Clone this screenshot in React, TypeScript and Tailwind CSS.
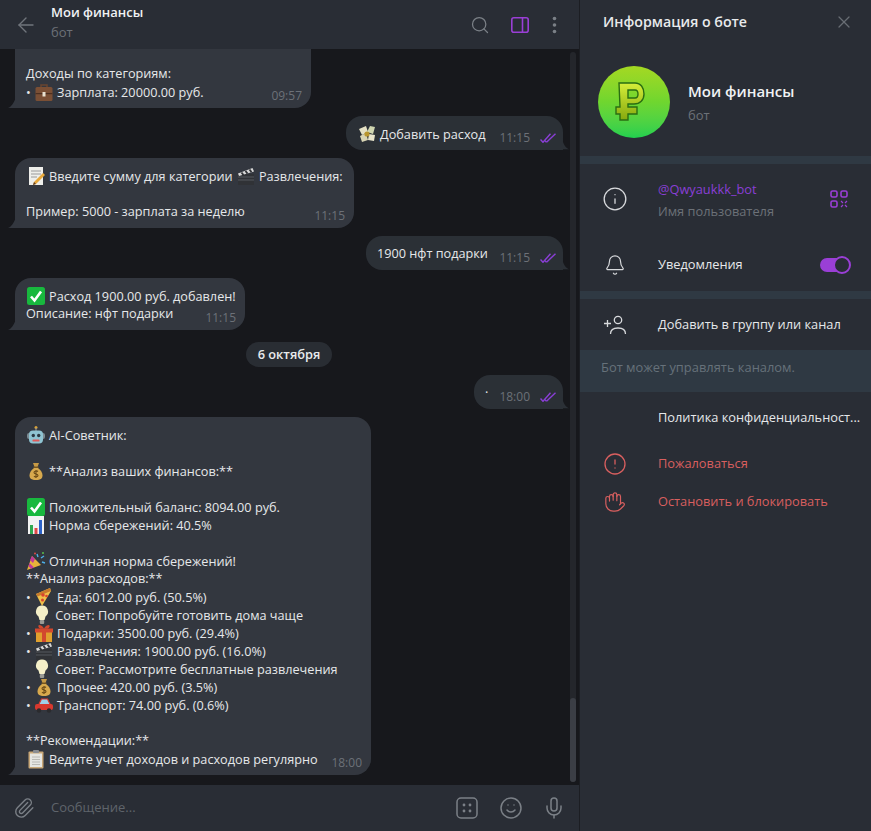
import type { ReactNode } from 'react';
import { ArrowLeft, Search, X, Info, Bell, Mic, Smile, Paperclip, Hand, CircleAlert } from 'lucide-react';

const emoji: Record<string, ReactNode> = {
  briefcase: (
    <>
      <path d="M7 6V3h6V6" fill="none" stroke="#6a4630" strokeWidth="1.500" />
      <rect x="1.500" y="5" width="17" height="14" rx="1.500" fill="#7a4f35" />
      <rect x="1.500" y="11" width="17" height="1.200" fill="#4e3020" />
      <rect x="8.500" y="10" width="3" height="4.500" fill="#e8e0d0" />
    </>
  ),
  money: (
    <>
      <path d="M2 5l7-3 2 6-6 3z" fill="#e4e0c4" />
      <path d="M18 3l-2 7-6-2 3-6z" fill="#cfd5b0" />
      <path d="M3 12l6-3 2 7-6 2z" fill="#d8d4b4" />
      <path d="M12 10l6 1-1 6-6-1z" fill="#e8e4cc" />
      <circle cx="10" cy="10" r="2.600" fill="#b9962e" />
    </>
  ),
  memo: (
    <>
      <rect x="3" y="1" width="14" height="18" fill="#eeeeea" />
      <path d="M5 5h10M5 8h10M5 11h6" stroke="#9a9a9a" strokeWidth="1" />
      <path d="M17 7l2 2-9 9-3 1 1-3z" fill="#e8a83a" />
      <path d="M7 19l1-3 2 2z" fill="#5a3a26" />
    </>
  ),
  clapper: (
    <>
      <rect x="2" y="8" width="16" height="11" fill="#303236" />
      <path d="M2 11h16M2 14h16" stroke="#55585e" strokeWidth="1" />
      <path d="M2 7.500L16.500 2l1.500 3.500L3 10z" fill="#d8d8d8" />
      <path d="M5.500 6.500l2 2.600M9.500 5l2 2.600M13.500 3.500l2 2.600" stroke="#303236" strokeWidth="1.800" />
    </>
  ),
  check: (
    <>
      <rect x="1" y="1" width="18" height="18" rx="2.500" fill="#18b83e" />
      <path d="M5 10.500l3.500 4L15 5.500" fill="none" stroke="#fff" strokeWidth="2.600" />
    </>
  ),
  robot: (
    <>
      <circle cx="10" cy="2.500" r="1.500" fill="#d9a33a" />
      <rect x="9.400" y="3" width="1.200" height="3" fill="#8a8d92" />
      <rect x="1" y="8" width="18" height="6" rx="2" fill="#7b8a92" />
      <rect x="3" y="5.500" width="14" height="13" rx="4" fill="#8fc4d2" />
      <circle cx="7.300" cy="10.500" r="1.700" fill="#2c3a44" />
      <circle cx="12.700" cy="10.500" r="1.700" fill="#2c3a44" />
      <rect x="6.500" y="14.500" width="7" height="2" rx="0.600" fill="#e05a5a" />
    </>
  ),
  bag: (
    <>
      <path d="M7 2h6l-1.500 4h-3z" fill="#c79a45" />
      <rect x="7.500" y="5.500" width="5" height="1.400" fill="#7d5a20" />
      <path d="M8 7h4c3 2 4.500 5 4.500 7.500 0 3-2 4.500-6.500 4.500s-6.500-1.500-6.500-4.500C3.500 12 5 9 8 7z" fill="#d8a94d" />
      <path d="M12 10.500c-1-1-4-.8-4 1 0 2 4 1 4 3 0 1.500-3 1.800-4 .6M10 9v8" fill="none" stroke="#6d4c17" strokeWidth="1.100" />
    </>
  ),
  chart: (
    <>
      <rect x="2" y="1" width="16" height="18" fill="#f2f2f2" />
      <rect x="4" y="10" width="3" height="9" fill="#2fa84f" />
      <rect x="8.500" y="13" width="3" height="6" fill="#e04848" />
      <rect x="13" y="5" width="3" height="14" fill="#2c62c8" />
    </>
  ),
  party: (
    <>
      <path d="M1 19L6 5l9 9z" fill="#e8b23a" />
      <path d="M3.500 12l4.500 4.500-3 1.200-2.500-2.500zM6 5l3 3-2 4-3-3z" fill="#c0399a" />
      <path d="M11 3l1 3M15 7l3-2M16 11l3 1" stroke="#4db0e8" strokeWidth="1.400" />
      <circle cx="9" cy="2.500" r="1" fill="#e04848" />
      <circle cx="17" cy="2" r="1" fill="#59c04a" />
    </>
  ),
  pizza: (
    <>
      <path d="M2 7L16 1l1 3-9 15z" fill="#efc04a" />
      <path d="M2 7L16 1l1 3L3.500 9.500z" fill="#c77a2c" />
      <circle cx="9" cy="8" r="1.800" fill="#d8432f" />
      <circle cx="12.500" cy="9" r="1.300" fill="#d8432f" />
      <circle cx="8.500" cy="13" r="1.500" fill="#d8432f" />
    </>
  ),
  bulb: (
    <>
      <path d="M10 0.500a6 6 0 0 1 3.500 10.900L12.500 15h-5l-1-3.600A6 6 0 0 1 10 0.500z" fill="#f4efc8" />
      <rect x="7.800" y="15" width="4.400" height="4" rx="1" fill="#9a9a94" />
    </>
  ),
  gift: (
    <>
      <rect x="2" y="8" width="16" height="11" fill="#e0a02e" />
      <rect x="1" y="5.500" width="18" height="4" fill="#d2492e" />
      <rect x="8" y="5.500" width="4" height="13.500" fill="#d2492e" />
      <path d="M10 5.500C7 1 3.500 1.500 4.500 4S8 5.500 10 5.500C12 5.500 14.500 6.500 15.500 4S13 1 10 5.500z" fill="#d2492e" />
    </>
  ),
  car: (
    <>
      <path d="M5 9l2.500-5h6L16 9z" fill="#9fd0e8" />
      <path d="M5 9l2.500-5h6L16 9" fill="none" stroke="#d8382e" strokeWidth="1.200" />
      <rect x="1" y="9" width="18" height="6" rx="2" fill="#d8382e" />
      <circle cx="5" cy="15.500" r="2.200" fill="#2b2b2e" />
      <circle cx="15" cy="15.500" r="2.200" fill="#2b2b2e" />
    </>
  ),
  clipboard: (
    <>
      <rect x="2.500" y="2.500" width="15" height="17" rx="1" fill="#c9a878" />
      <rect x="4" y="4.500" width="12" height="13.500" fill="#e6e6e2" />
      <path d="M6 8h8M6 10.500h8M6 13h8M6 15.500h8" stroke="#b4b4b0" strokeWidth="0.900" />
      <rect x="7" y="1" width="6" height="3" rx="0.800" fill="#8a8d92" />
    </>
  ),
};

function E({ n }: { n: string }) {
  return (
    <svg viewBox="0 0 20 20" className="inline-block w-[20px] h-[20px] align-[-5px] mr-[3px]">
      {emoji[n]}
    </svg>
  );
}

function L({ children }: { children?: ReactNode }) {
  return <div className="h-[18px] leading-[18px] whitespace-pre text-[12.700px]">{children}</div>;
}

function Ticks() {
  return (
    <svg viewBox="0 0 17 10" fill="none" stroke="#8a3fd6" strokeWidth="1.400" className="w-[17px] h-[10px]">
      <path d="M0.500 6.500L3 9.300L10.500 0.700" />
      <path d="M6.500 9.300L15.500 0.700" />
      <path d="M5 7.800L6.500 9.300" />
    </svg>
  );
}

function Tail({ side }: { side: 'in' | 'out' }) {
  if (side === 'in') {
    return (
      <svg viewBox="0 0 8 12" className="absolute left-[-7px] bottom-0 w-[8px] h-[12px] fill-[#33373f]">
        <path d="M8 0V12H0C3 11 6.500 7 8 0z" />
      </svg>
    );
  }
  return (
    <svg viewBox="0 0 8 12" className="absolute right-[-6px] bottom-0 w-[7px] h-[12px] fill-[#2b3036]">
      <path d="M0 0V12H8C5 11 1.500 7 0 0z" />
    </svg>
  );
}

function Incoming({ width, time, children, clipped }: { width: string; time: string; children: ReactNode; clipped?: boolean }) {
  return (
    <div className={`relative self-start bg-[#33373f] pl-[11px] pt-2 pb-2 rounded-br-2xl ${clipped ? '' : 'rounded-t-2xl'} ${width}`}>
      {children}
      <Tail side="in" />
      <span className="absolute right-[9px] bottom-[3px] text-[12px] leading-[18px] text-[#6c7178]">{time}</span>
    </div>
  );
}

function Outgoing({ width, time, children }: { width: string; time: string; children: ReactNode }) {
  return (
    <div className={`relative self-end bg-[#2b3036] pl-[11px] pt-2 pb-2 rounded-t-2xl rounded-bl-2xl ${width}`}>
      {children}
      <Tail side="out" />
      <div className="absolute right-[6px] bottom-[3px] flex items-center gap-[10px] text-[12px] leading-[18px] text-[#6c7178]">
        <span>{time}</span>
        <Ticks />
      </div>
    </div>
  );
}

function Messages() {
  return (
    <div className="relative flex-1 min-h-0 overflow-hidden bg-[#17181c]">
      <div className="absolute bottom-[10px] left-[15px] right-[16px] flex flex-col gap-2">
        <Incoming width="w-[296px]" time="09:57" clipped>
          <L />
          <L>Доходы по категориям:</L>
          <L>
            • <E n="briefcase" />
            Зарплата: 20000.00 руб.
          </L>
        </Incoming>
        <Outgoing width="w-[217px]" time="11:15">
          <L>
            <E n="money" />
            Добавить расход
          </L>
        </Outgoing>
        <Incoming width="w-[339px]" time="11:15">
          <L>
            <E n="memo" />
            Введите сумму для категории <E n="clapper" />
            Развлечения:
          </L>
          <L />
          <L>Пример: 5000 - зарплата за неделю</L>
        </Incoming>
        <Outgoing width="w-[197px]" time="11:15">
          <L>1900 нфт подарки</L>
        </Outgoing>
        <Incoming width="w-[230px]" time="11:15">
          <L>
            <E n="check" />
            Расход 1900.00 руб. добавлен!
          </L>
          <L>Описание: нфт подарки</L>
        </Incoming>
        <div className="self-center mt-1 h-[25px] rounded-full bg-[#292d33] px-3 text-[12.800px] font-semibold leading-[25px] text-[#e8eaec]">
          6 октября
        </div>
        <Outgoing width="w-[89px]" time="18:00">
          <L>·</L>
        </Outgoing>
        <Incoming width="w-[356px]" time="18:00">
          <L>
            <E n="robot" />
            AI-Советник:
          </L>
          <L />
          <L>
            <E n="bag" />
            **Анализ ваших финансов:**
          </L>
          <L />
          <L>
            <E n="check" />
            Положительный баланс: 8094.00 руб.
          </L>
          <L>
            <E n="chart" />
            Норма сбережений: 40.5%
          </L>
          <L />
          <L>
            <E n="party" />
            Отличная норма сбережений!
          </L>
          <L>**Анализ расходов:**</L>
          <L>
            • <E n="pizza" />
            Еда: 6012.00 руб. (50.5%)
          </L>
          <L>
            <span className="inline-block w-[3px]" /> <E n="bulb" />
            Совет: Попробуйте готовить дома чаще
          </L>
          <L>
            • <E n="gift" />
            Подарки: 3500.00 руб. (29.4%)
          </L>
          <L>
            • <E n="clapper" />
            Развлечения: 1900.00 руб. (16.0%)
          </L>
          <L>
            <span className="inline-block w-[3px]" /> <E n="bulb" />
            Совет: Рассмотрите бесплатные развлечения
          </L>
          <L>
            • <E n="bag" />
            Прочее: 420.00 руб. (3.5%)
          </L>
          <L>
            • <E n="car" />
            Транспорт: 74.00 руб. (0.6%)
          </L>
          <L />
          <L>**Рекомендации:**</L>
          <L>
            <E n="clipboard" />
            Ведите учет доходов и расходов регулярно
          </L>
        </Incoming>
      </div>
      {/* scrollbar */}
      <div className="absolute right-[3px] top-[3px] bottom-[3px] w-[6px] rounded-full bg-[#24262b]">
        <div className="absolute bottom-0 left-0 right-0 h-[84px] rounded-full bg-[#3b3e45]" />
      </div>
    </div>
  );
}

function InfoRow({ icon, children, right, red }: { icon?: ReactNode; children: ReactNode; right?: ReactNode; red?: boolean }) {
  return (
    <div className={`flex flex-1 items-center ${red ? 'text-[#d85f5f]' : 'text-[#e6e8ea]'}`}>
      <div className="w-[78px] flex justify-center pr-[8px] shrink-0">{icon}</div>
      <div className="flex-1 min-w-0">{children}</div>
      {right}
    </div>
  );
}

export default function App() {
  return (
    <div
      className="flex h-[831px] w-[871px] overflow-hidden bg-[#292d35] text-[12.800px] text-[#e6e8ea]"
      style={{ fontFamily: '"Open Sans", sans-serif' }}
    >
      <div className="flex w-[579px] shrink-0 flex-col">
        <header className="flex h-[49px] shrink-0 items-center bg-[#292d35] pl-[14px]">
          <ArrowLeft className="h-[24px] w-[24px] text-[#70757c]" strokeWidth={1.4} />
          <div className="ml-[13px] flex-1">
            <div className="text-[13px] font-semibold leading-[18px] text-[#f0f2f4] mb-[2px] -mt-[6px]">Мои финансы</div>
            <div className="text-[13px] leading-[18px] text-[#6c7178]">бот</div>
          </div>
          <Search className="h-[20px] w-[20px] text-[#7b8087]" strokeWidth={1.5} />
          <svg viewBox="0 0 18 16" fill="none" stroke="#9a3fd6" strokeWidth="1.600" className="ml-[21px] h-[16px] w-[18px]">
            <rect x="0.800" y="0.800" width="16.400" height="14.400" rx="2" />
            <path d="M11.500 1v14" />
          </svg>
          <svg viewBox="0 0 4 18" className="ml-[23px] mr-[22px] h-[18px] w-[5px] fill-[#7b8087]">
            <circle cx="2" cy="2.500" r="1.800" />
            <circle cx="2" cy="9" r="1.800" />
            <circle cx="2" cy="15.500" r="1.800" />
          </svg>
        </header>
        <Messages />
        <footer className="flex h-[46px] shrink-0 items-center bg-[#292d35] pl-[13px]">
          <Paperclip className="h-[22px] w-[22px] text-[#7b8087]" strokeWidth={1.5} />
          <div className="ml-[16px] flex-1 text-[13px] text-[#5f646b]">Сообщение...</div>
          <svg viewBox="0 0 22 22" fill="none" className="h-[22px] w-[22px]">
            <rect x="1" y="1" width="20" height="20" rx="4" stroke="#7b8087" strokeWidth="1.500" />
            <circle cx="8" cy="8" r="1.400" fill="#7b8087" />
            <circle cx="14" cy="8" r="1.400" fill="#7b8087" />
            <circle cx="8" cy="14" r="1.400" fill="#7b8087" />
            <circle cx="14" cy="14" r="1.400" fill="#7b8087" />
          </svg>
          <Smile className="ml-[21px] h-[24px] w-[24px] text-[#7b8087]" strokeWidth={1.5} />
          <Mic className="ml-[19px] mr-[13px] h-[24px] w-[24px] text-[#7b8087]" strokeWidth={1.5} />
        </footer>
      </div>

      <div className="w-px shrink-0 bg-[#1c1e23]" />

      <aside className="flex min-w-0 flex-1 flex-col bg-[#292d35]">
        <div className="flex h-[43px] shrink-0 items-center justify-between pl-[23px] pr-[17px] mb-[2px]">
          <div className="text-[14.200px] font-semibold text-[#e8eaec]">Информация о боте</div>
          <X className="h-[20px] w-[20px] text-[#686d74]" strokeWidth={1.5} />
        </div>

        <div className="flex h-[111px] shrink-0 items-start pl-[18px] pt-[21px]">
          <div className="h-[72px] w-[72px] shrink-0 rounded-full bg-gradient-to-b from-[#a4d822] via-[#6fd62f] to-[#1fd04f]">
            <svg viewBox="0 0 72 72" className="h-[72px] w-[72px]">
              <defs>
                <linearGradient id="ruble" x1="0" y1="0" x2="0" y2="1">
                  <stop offset="0" stopColor="#d6ee3a" />
                  <stop offset="1" stopColor="#86a80e" />
                </linearGradient>
              </defs>
              <path
                d="M21 17H37C43 17 46 22 46 28C46 34 42 38 36 38H30V41H39V48H30V54H22V48H18V41H22ZM30 24V32H37C39 32 40 31 40 28C40 26 39.500 24 37 24Z"
                fillRule="evenodd"
                fill="url(#ruble)"
                stroke="#2a6e12"
                strokeWidth="1.400"
              />
            </svg>
          </div>
          <div className="ml-[18px] pt-[14px]">
            <div className="text-[15px] font-semibold leading-[22px] text-[#f0f2f4]">Мои финансы</div>
            <div className="mt-[4px] text-[13px] leading-[18px] text-[#6c7178]">бот</div>
          </div>
        </div>

        <div className="h-[8px] shrink-0 bg-[#2f3943]" />

        <div className="flex h-[127px] shrink-0 flex-col">
          <div className="flex pt-[14px]">
            <InfoRow
              icon={<Info className="h-[26px] w-[26px] -translate-y-px text-[#d8dadd]" strokeWidth={1.2} />}
              right={
                <svg viewBox="0 0 18 18" fill="none" stroke="#9a3fd6" strokeWidth="1.600" className="mr-[23px] h-[18px] w-[18px] -translate-y-px">
                  <rect x="1" y="1" width="6" height="6" rx="1.600" />
                  <rect x="11" y="1" width="6" height="6" rx="1.600" />
                  <rect x="1" y="11" width="6" height="6" rx="1.600" />
                  <path d="M11 11l2 2M17 11l-2 2M11 17l2-2M17 17l-2-2" strokeWidth="1.200" />
                </svg>
              }
            >
              <div className="leading-[22px] text-[#8a3fd6]">@Qwyaukkk_bot</div>
              <div className="leading-[22px] text-[#6c7178]">Имя пользователя</div>
            </InfoRow>
          </div>
          <div className="flex pt-[32px]">
            <InfoRow
              icon={<Bell className="h-[22px] w-[22px] text-[#d8dadd]" strokeWidth={1.3} />}
              right={
                <div className="relative mr-[21px] h-[14px] w-[30px] rounded-full bg-[#9a3fd6]">
                  <div className="absolute -right-px -top-[2px] h-[18px] w-[18px] rounded-full border-2 border-[#9a3fd6] bg-[#292d35]" />
                </div>
              }
            >
              Уведомления
            </InfoRow>
          </div>
        </div>

        <div className="h-[8px] shrink-0 bg-[#2f3943]" />

        <div className="flex h-[51px] shrink-0 items-center pt-[1px]">
          <InfoRow
            icon={
              <svg viewBox="0 0 24 20" fill="none" stroke="#d8dadd" strokeWidth="1.300" className="h-[20px] w-[24px]">
                <circle cx="15" cy="5" r="3.700" />
                <path d="M7.500 19c0-4 3-6 7.500-6s7.500 2 7.500 6" />
                <path d="M1 8.500h7M4.500 5v7" />
              </svg>
            }
          >
            Добавить в группу или канал
          </InfoRow>
        </div>

        <div className="flex h-[42px] shrink-0 items-center bg-[#2f3943] pb-[6px] pl-[21px] text-[12.900px] text-[#66717a]">
          Бот может управлять каналом.
        </div>

        <div className="flex h-[50px] shrink-0 items-center pl-[78px] pt-[1px]">
          <div className="truncate">Политика конфиденциальност...</div>
        </div>

        <div className="pt-[3px]">
          <div className="flex h-[38px] items-center">
            <InfoRow red icon={<CircleAlert className="h-[24px] w-[24px]" strokeWidth={1.3} />}>
              Пожаловаться
            </InfoRow>
          </div>
          <div className="flex h-[38px] items-center">
            <InfoRow red icon={<Hand className="h-[22px] w-[22px] -scale-x-100" strokeWidth={1.3} />}>
              Остановить и блокировать
            </InfoRow>
          </div>
        </div>
      </aside>
    </div>
  );
}
